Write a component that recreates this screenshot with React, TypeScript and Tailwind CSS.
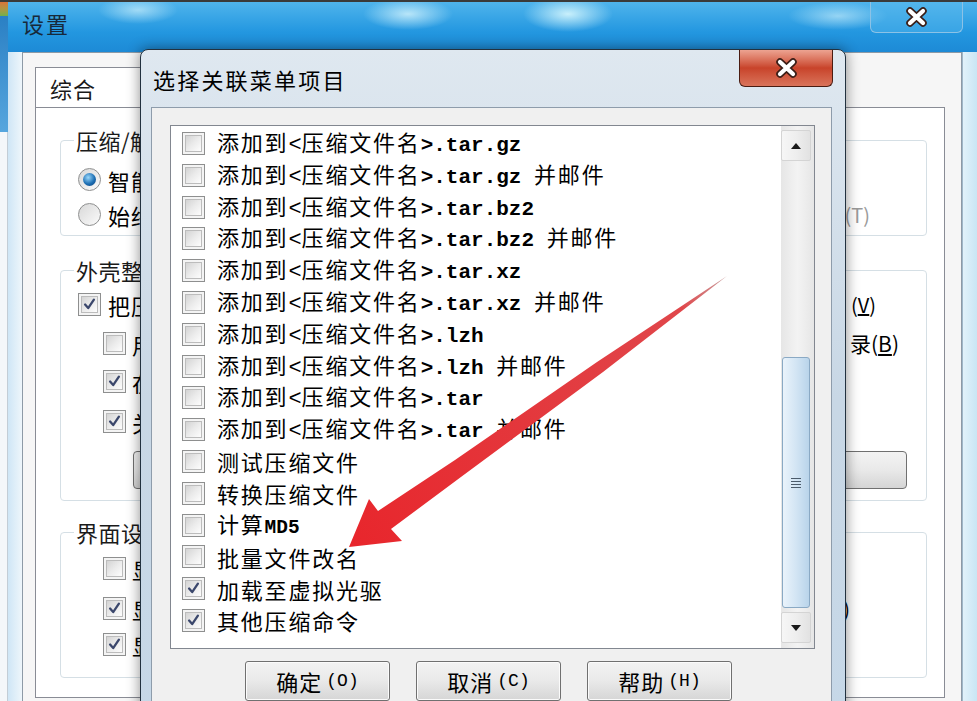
import React from 'react';

const cjk = "font-['Noto_Sans_CJK_SC',sans-serif]";
const mono = "font-['Liberation_Mono',monospace]";

type Item = { ext?: string; mail?: boolean; text?: string; tail?: string; checked?: boolean };

const items: Item[] = [
    { ext: '.tar.gz' },
    { ext: '.tar.gz', mail: true },
    { ext: '.tar.bz2' },
    { ext: '.tar.bz2', mail: true },
    { ext: '.tar.xz' },
    { ext: '.tar.xz', mail: true },
    { ext: '.lzh' },
    { ext: '.lzh', mail: true },
    { ext: '.tar' },
    { ext: '.tar', mail: true },
    { text: '测试压缩文件' },
    { text: '转换压缩文件' },
    { text: '计算', tail: 'MD5' },
    { text: '批量文件改名' },
    { text: '加载至虚拟光驱', checked: true },
    { text: '其他压缩命令', checked: true },
];

function XMark({ className }: { className?: string }) {
    return (
        <svg viewBox="0 0 23 20" className={className}>
            <path d="M5 4 L18 16 M18 4 L5 16" fill="none" stroke="#3a1d16" strokeWidth={7.5} strokeLinecap="round" />
            <path d="M5 4 L18 16 M18 4 L5 16" fill="none" stroke="#ffffff" strokeWidth={4.2} strokeLinecap="round" />
        </svg>
    );
}

function CheckBox({ checked }: { checked?: boolean }) {
    return (
        <span className="flex h-[23px] w-[23px] shrink-0 items-center justify-center border border-[#8e8f8f] bg-[#f4f4f4]">
            <span className="flex h-[17px] w-[17px] items-center justify-center border border-[#bcbcbc] bg-gradient-to-br from-[#d4d4d4] via-[#ebebeb] to-[#fdfdfd]">
                {checked && (
                    <svg viewBox="0 0 17 17" className="h-[17px] w-[17px]">
                        <path d="M3.5 8.5 L7 12.5 L13.5 3" fill="none" stroke="#3b476c" strokeWidth={2.6} strokeLinecap="round" strokeLinejoin="round" />
                    </svg>
                )}
            </span>
        </span>
    );
}

function Radio({ checked }: { checked?: boolean }) {
    return (
        <span className="flex h-[23px] w-[23px] shrink-0 items-center justify-center rounded-full border border-[#8e8f8f] bg-gradient-to-br from-[#d8d8d8] to-[#fbfbfb]">
            {checked && (
                <span className="h-[13px] w-[13px] rounded-full bg-[radial-gradient(circle_at_40%_35%,#9ad8fb,#1d6fb4_55%,#0c3d74)]" />
            )}
        </span>
    );
}

function Arrow({ up }: { up?: boolean }) {
    return (
        <svg viewBox="0 0 10 6" className="h-[6px] w-[10px]">
            <polygon points={up ? '5,0 10,6 0,6' : '0,0 10,0 5,6'} fill="#1a1a1a" />
        </svg>
    );
}

function ScrollButton({ up }: { up?: boolean }) {
    return (
        <div className="flex h-[31px] w-[30px] items-center justify-center rounded-[2px] border border-[#d4d4d4] bg-gradient-to-r from-[#f6f6f6] via-[#eeeeee] to-[#e2e2e2]">
            <Arrow up={up} />
        </div>
    );
}

function WinButton({ label, keyName }: { label: string; keyName: string }) {
    return (
        <div className="flex h-[40px] w-[145px] items-center justify-center rounded-[3px] border border-[#707070] bg-gradient-to-b from-[#f3f3f3] via-[#e9e9e9] to-[#d6d6d6] shadow-[inset_0_0_0_1px_#fbfbfb]">
            <span className="text-[22px] leading-none tracking-[1px] text-black">{label}</span>
            <span className={`${mono} ml-[4px] text-[18px] leading-none text-black`}>({keyName})</span>
        </div>
    );
}

function ListRow({ it }: { it: Item }) {
    return (
        <div className="flex h-[31.8px] shrink-0 items-center gap-[12px] pl-[11px]">
            <CheckBox checked={it.checked} />
            <span className="flex items-baseline whitespace-pre leading-none text-black">
                {it.ext ? (
                    <>
                        <span className="text-[22px] tracking-[1.8px]">添加到</span>
                        <span className={`${mono} text-[22px]`}>&lt;</span>
                        <span className="text-[22px] tracking-[1.8px]">压缩文件名</span>
                        <span className={`${mono} text-[21px] font-bold`}>{'>' + it.ext + (it.mail ? ' ' : '')}</span>
                        {it.mail && <span className="text-[22px] tracking-[1.8px]">并邮件</span>}
                    </>
                ) : (
                    <>
                        <span className="text-[22px] tracking-[1.8px]">{it.text}</span>
                        {it.tail && <span className={`${mono} text-[19.5px] font-bold`}>{it.tail}</span>}
                    </>
                )}
            </span>
        </div>
    );
}

function Legend({ children }: { children: React.ReactNode }) {
    return <legend className="ml-[13px] px-[2px] text-[22px] leading-[30px] tracking-[0.5px] text-[#1a1a1a]">{children}</legend>;
}

function SettingsWindow() {
    return (
        <div className="flex flex-1 flex-col">
            {/* title bar */}
            <div className="flex h-[50px] shrink-0 items-start bg-[radial-gradient(ellipse_45px_16px_at_400px_12px,rgba(225,250,255,0.75),transparent),radial-gradient(ellipse_45px_18px_at_560px_12px,rgba(225,252,255,0.85),transparent),radial-gradient(ellipse_40px_14px_at_130px_8px,rgba(225,250,255,0.6),transparent),radial-gradient(ellipse_50px_14px_at_830px_14px,rgba(225,250,255,0.55),transparent),linear-gradient(to_bottom,#4fb4ec,#2397e0_60%,#1d8ad6)]">
                <span className="ml-[14px] mt-[6px] text-[22px] leading-[30px] tracking-[2px] text-[#17293a]">设置</span>
                <div className="ml-auto mr-[14px] flex h-[31px] w-[93px] items-center justify-center rounded-b-[6px] border border-t-0 border-[#8cc2e6] bg-[#5ab8ee]/40">
                    <XMark className="h-[20px] w-[23px]" />
                </div>
            </div>
            {/* body */}
            <div className="flex min-h-0 flex-1">
                <div className="w-[14px] shrink-0 bg-gradient-to-r from-[#cfe6f6] to-[#eef6fb]" />
                <div className="flex w-[940px] shrink-0 flex-col border-x border-t border-[#8d9aa6] bg-[#f6f6f6] pb-[3px] pl-[12px] pr-[16px] pt-[14px]">
                    <div className="flex h-[41px] w-[130px] items-center border border-b-0 border-[#898c95] bg-white pl-[14px] text-[22px] tracking-[1px] text-[#1a1a1a]">
                        综合
                    </div>
                    <div className="-mt-px flex min-h-0 flex-1 flex-col border border-[#898c95] bg-white">
                        {/* group 1 */}
                        <fieldset className="ml-[24px] mt-[17px] h-[111px] w-[867px] rounded-[4px] border border-[#d5dfe5]">
                            <Legend>压缩/解</Legend>
                            <div className="flex flex-col gap-[12px] pl-[17px] pt-[13px] text-[22px] leading-none text-black">
                                <div className="flex h-[23px] items-center gap-[7px]">
                                    <Radio checked />
                                    <span className="tracking-[1px]">智能</span>
                                </div>
                                <div className="flex h-[23px] items-center gap-[7px]">
                                    <Radio />
                                    <span className="tracking-[1px]">始终</span>
                                    <span className="ml-auto mr-[56px] text-[20px] text-[#9a9a9a]">式(T)</span>
                                </div>
                            </div>
                        </fieldset>
                        {/* group 2 */}
                        <fieldset className="ml-[24px] mt-[19px] h-[246px] w-[867px] rounded-[4px] border border-[#d5dfe5]">
                            <Legend>外壳整</Legend>
                            <div className="flex flex-col pl-[17px] pt-[8px] text-[22px] leading-none text-black">
                                <div className="flex h-[23px] items-center gap-[7px]">
                                    <CheckBox checked />
                                    <span className="tracking-[1px]">把压</span>
                                    <span className="ml-auto mr-[50px] text-[20px]">
                                        (<span className="underline">V</span>)
                                    </span>
                                </div>
                                <div className="ml-[25px] mt-[16px] flex h-[23px] items-center gap-[6px]">
                                    <CheckBox />
                                    <span className="tracking-[1px]">用</span>
                                    <span className="ml-auto mr-[27px] text-[21px]">
                                        录(<span className="underline">B</span>)
                                    </span>
                                </div>
                                <div className="ml-[25px] mt-[15px] flex h-[23px] items-center gap-[6px]">
                                    <CheckBox checked />
                                    <span className="tracking-[1px]">在</span>
                                </div>
                                <div className="ml-[25px] mt-[17px] flex h-[23px] items-center gap-[6px]">
                                    <CheckBox checked />
                                    <span className="tracking-[1px]">关</span>
                                </div>
                                <div className="ml-[55px] mt-[18px] h-[38px] w-[774px] rounded-[4px] border border-[#707070] bg-gradient-to-b from-[#f3f3f3] via-[#e9e9e9] to-[#d5d5d5]" />
                            </div>
                        </fieldset>
                        {/* group 3 */}
                        <fieldset className="ml-[24px] mt-[16px] h-[161px] w-[867px] rounded-[4px] border border-[#d5dfe5]">
                            <Legend>界面设</Legend>
                            <div className="flex flex-col pl-[42px] pt-[10px] text-[22px] leading-none text-black">
                                <div className="flex h-[23px] items-center gap-[6px]">
                                    <CheckBox />
                                    <span className="tracking-[1px]">显</span>
                                </div>
                                <div className="mt-[17px] flex h-[23px] items-center gap-[6px]">
                                    <CheckBox checked />
                                    <span className="tracking-[1px]">显</span>
                                    <span className="ml-auto mr-[76px] text-[20px]">(D)</span>
                                </div>
                                <div className="mt-[13px] flex h-[23px] items-center gap-[6px]">
                                    <CheckBox checked />
                                    <span className="tracking-[1px]">显</span>
                                </div>
                            </div>
                        </fieldset>
                    </div>
                </div>
                <div className="w-[15px] shrink-0 border-l border-[#9fb7c8] bg-gradient-to-r from-[#e2f2fa] to-[#c9e6f4]" />
            </div>
        </div>
    );
}

function SelectDialog() {
    return (
        <div className="absolute left-[140px] top-[49px] flex h-[700px] w-[706px] flex-col rounded-t-[8px] border border-[#22313f] bg-gradient-to-b from-[#dfe8f0] via-[#c8d7e5] to-[#c6d8e8] shadow-[0_0_14px_rgba(0,0,0,0.45)]">
            {/* title bar */}
            <div className="flex h-[57px] shrink-0 items-start">
                <span className="ml-[12px] mt-[14px] text-[22px] leading-[30px] tracking-[2.2px] text-black">选择关联菜单项目</span>
                <div className="ml-auto mr-[12px] flex h-[37px] w-[94px] items-center justify-center rounded-b-[6px] border border-t-0 border-[#4a1c12] bg-gradient-to-b from-[#eca391] via-[#c8432a] to-[#d9735a]">
                    <XMark className="h-[20px] w-[23px]" />
                </div>
            </div>
            {/* client */}
            <div className="ml-[10px] flex w-[681px] flex-1 flex-col border-x border-t border-[#8e9cab] bg-[#f0f0f0]">
                <div className="ml-[18px] mt-[17px] flex h-[524px] w-[645px] border border-[#828790] bg-white">
                    <div className="flex flex-1 flex-col pt-[1.6px]">
                        {items.map((it, i) => (
                            <ListRow key={i} it={it} />
                        ))}
                    </div>
                    <div className="flex w-[33px] flex-col bg-gradient-to-r from-[#e6e6e6] via-[#f3f3f3] to-[#e6e6e6]">
                        <div className="mt-[4px]">
                            <ScrollButton up />
                        </div>
                        <div className="ml-[1px] mt-[196px] flex h-[251px] w-[28px] items-center justify-center rounded-[3px] border border-[#8aa9c4] bg-gradient-to-r from-[#eaf3fb] via-[#d3e5f4] to-[#b9d4ea]">
                            <div className="flex w-[10px] flex-col gap-[2px]">
                                <span className="h-px bg-[#4b5b6b]" />
                                <span className="h-px bg-[#4b5b6b]" />
                                <span className="h-px bg-[#4b5b6b]" />
                                <span className="h-px bg-[#4b5b6b]" />
                            </div>
                        </div>
                        <div className="mt-[4px]">
                            <ScrollButton />
                        </div>
                    </div>
                </div>
                <div className="flex gap-[26px] pl-[93px] pt-[12px]">
                    <WinButton label="确定" keyName="O" />
                    <WinButton label="取消" keyName="C" />
                    <WinButton label="帮助" keyName="H" />
                </div>
            </div>
        </div>
    );
}

function RedArrow() {
    return (
        <svg viewBox="0 0 977 701" className="pointer-events-none absolute inset-0 h-[701px] w-[977px]">
            <defs>
                <linearGradient id="arrowFill" x1="727" y1="276" x2="352" y2="544" gradientUnits="userSpaceOnUse">
                    <stop offset="0" stopColor="#c9a0a0" />
                    <stop offset="0.12" stopColor="#e0474b" />
                    <stop offset="1" stopColor="#e8262c" />
                </linearGradient>
            </defs>
            <polygon
                points="349,547 369,499 378,511 455,460 597,362 727,276 603,372 465,474 391,529 402,541"
                fill="url(#arrowFill)"
            />
        </svg>
    );
}

export default function App() {
    return (
        <div className={`relative h-[701px] w-[977px] overflow-hidden bg-[#f0f0f0] ${cjk}`}>
            <div className="flex h-full flex-col">
                <div className="h-[2px] shrink-0 bg-[#3a3a3a]" />
                <div className="flex min-h-0 flex-1">
                    {/* edge of another window */}
                    <div className="flex w-[8px] shrink-0 flex-col">
                        <div className="h-[14px] bg-gradient-to-b from-[#d9733a] to-[#6fb04c]" />
                        <div className="h-[116px] bg-gradient-to-b from-[#2a80c4] to-[#56a6de]" />
                        <div className="flex-1 border-r border-[#c3cdd6] bg-[#f4f7fa]" />
                    </div>
                    <SettingsWindow />
                </div>
            </div>
            <SelectDialog />
            <RedArrow />
        </div>
    );
}
